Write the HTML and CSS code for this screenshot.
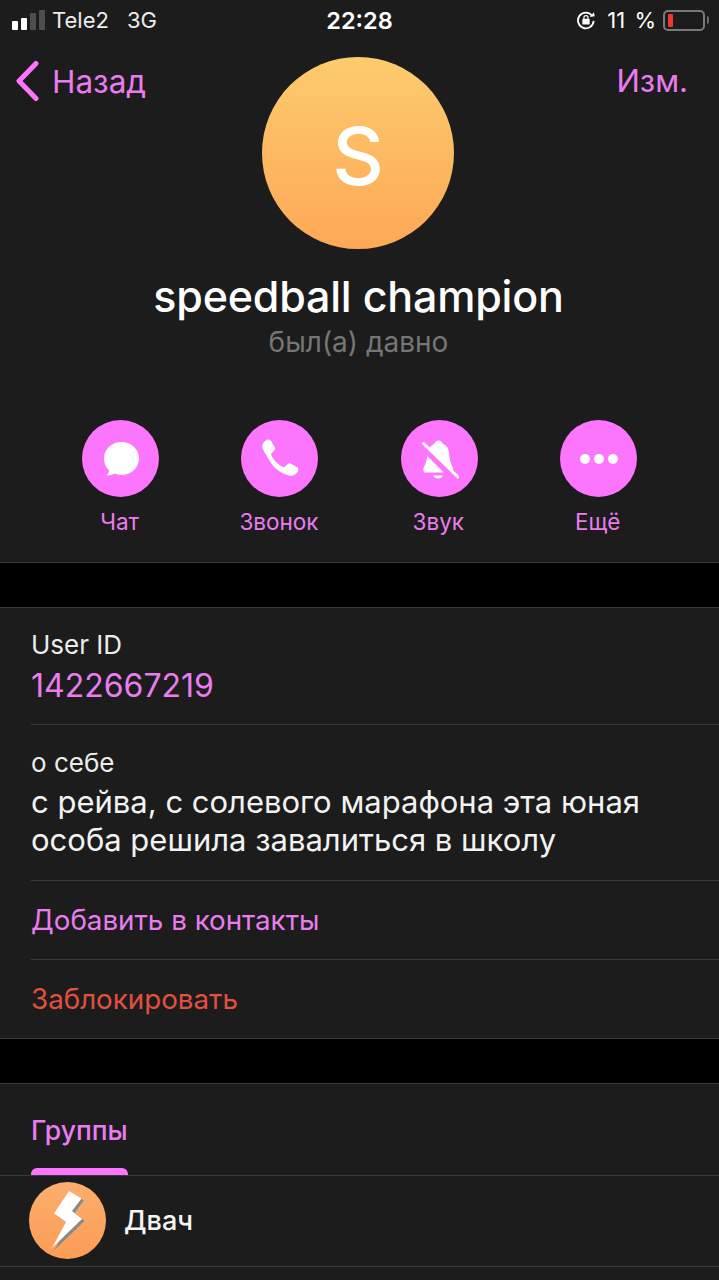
FILE: index.html
```html
<!DOCTYPE html>
<html lang="ru">

<head>
    <meta charset="UTF-8">
    <meta name="viewport" content="width=device-width, initial-scale=1.0">
    <title>speedball champion</title>
    <link rel="stylesheet" href="styles.css">
</head>

<body>
    <div class="statusbar">
        <div class="status-left">
            <span class="signal">
                <i class="on s1"></i><i class="on s2"></i><i class="s3"></i><i class="s4"></i>
            </span>
            <span class="carrier">Tele2</span>
            <span class="network">3G</span>
        </div>
        <div class="status-time">22:28</div>
        <div class="status-right">
            <svg class="lock" width="20" height="20" viewBox="0 0 22 22">
                <path d="M17.600 6.200A8.600 8.600 0 1 0 19.400 12" fill="none" stroke="#fff" stroke-width="2" />
                <path d="M15.200 7.600l5.400-.6-.9-4.600z" fill="#fff" />
                <rect x="7" y="9.600" width="8" height="6.400" rx="1" fill="#fff" />
                <path d="M8.700 9.800V8.400a2.300 2.300 0 0 1 4.600 0v1.400" fill="none" stroke="#fff" stroke-width="1.300" />
            </svg>
            <span class="percent">11 %</span>
            <span class="battery"><i class="battery-level"></i></span>
            <span class="battery-tip"></span>
        </div>
    </div>

    <header class="profile-head">
        <a class="back">
            <svg width="26" height="42" viewBox="0 0 26 42">
                <path d="M22 3.500L5 21l17 17.500" fill="none" stroke="#fb76fd" stroke-width="5" stroke-linecap="round" stroke-linejoin="round" />
            </svg>
            <span>Назад</span>
        </a>
        <div class="avatar">S</div>
        <a class="edit">Изм.</a>
    </header>

    <div class="name">speedball champion</div>
    <div class="last-seen">был(а) давно</div>

    <div class="actions">
        <div class="action">
            <span class="action-icon">
                <svg width="38" height="38" viewBox="0 0 38 38">
                    <path d="M19.500 2C29.300 2 37 9.300 37 18.500S29.300 35 19.500 35c-2.600 0-5-.5-7.200-1.400-1.700 1.300-4.300 2.100-7.800 2 1.500-1.500 2.400-3.200 2.700-5.200C3.700 27.300 2 23.100 2 18.500 2 9.300 9.700 2 19.500 2z" fill="#fff" />
                </svg>
            </span>
            <span class="action-label">Чат</span>
        </div>
        <div class="action">
            <span class="action-icon">
                <svg width="42" height="42" viewBox="0 0 42 42">
                    <path d="M4 5.500C5 3.500 7.500 1.500 9.500 1.500c1.300 0 2.200.8 2.900 2l3.200 5.600c.7 1.300.4 2.600-.6 3.600l-2.300 2.300c-.7.700-.7 1.400-.3 2.200 1.300 2.600 3 5 5 7 2 2 4.200 3.600 6.500 4.800.8.400 1.500.3 2.200-.4l2.300-2.300c1-1 2.300-1.300 3.600-.6l5.400 3.100c1.300.7 2.100 1.700 2 3-.1 1.900-2.300 4.300-4.300 5.200-1.500.7-3.300.9-5.100.5-6-1.300-11.500-5-15.700-9.200C9.500 20.600 5.500 15 3.700 10.500 3 8.700 3.200 7 4 5.500z" fill="#fff" />
                </svg>
            </span>
            <span class="action-label">Звонок</span>
        </div>
        <div class="action">
            <span class="action-icon">
                <svg width="40" height="44" viewBox="0 0 40 44">
                    <path d="M19.500 3.500c2.200 0 3.800 1.400 4 3.300 4.300 1.400 6.300 5.300 6.600 9.700.3 5 1.400 9.800 3.500 13.500 1 1.800.8 5.500-1 5.500H6.200c-1.800 0-2.300-3.500-1.300-5.300 2-3.700 3.300-8.600 3.800-13.700.5-4.400 3-8.300 6.800-9.700.2-1.900 1.800-3.300 4-3.300z" fill="#fff" />
                    <path d="M14 38.500h10c-.8 2-2.800 3-5 3s-4.200-1-5-3z" fill="#fff" />
                    <path d="M3 9.500l33 33" stroke="#fb76fd" stroke-width="6" />
                    <path d="M4.500 6.500L39 40" stroke="#fff" stroke-width="3" stroke-linecap="round" />
                </svg>
            </span>
            <span class="action-label">Звук</span>
        </div>
        <div class="action">
            <span class="action-icon">
                <svg width="38" height="12" viewBox="0 0 38 12">
                    <circle cx="5" cy="6" r="5" fill="#fff" />
                    <circle cx="19" cy="6" r="5" fill="#fff" />
                    <circle cx="33" cy="6" r="5" fill="#fff" />
                </svg>
            </span>
            <span class="action-label">Ещё</span>
        </div>
    </div>

    <div class="gap"></div>

    <section class="group">
        <div class="row info-row">
            <div class="row-label">User ID</div>
            <div class="row-value pink">1422667219</div>
        </div>
        <div class="row about-row">
            <div class="row-label">о себе</div>
            <div class="about-text">с рейва, с солевого марафона эта юная<br>особа решила завалиться в школу</div>
        </div>
        <div class="row link-row pink">Добавить в контакты</div>
        <div class="row link-row red">Заблокировать</div>
    </section>

    <div class="gap"></div>

    <section class="group groups-tab">
        <div class="tab">
            <span class="tab-title">Группы</span>
            <span class="tab-marker"></span>
        </div>
    </section>

    <div class="chat-row">
        <div class="chat-avatar">
            <svg width="40" height="60" viewBox="0 0 40 60">
                <path d="M21 0l12.500 7.500L24 20l10 8L4 57l14-26-12-8.500z" fill="#8a8a8a" transform="translate(2.500 2)" />
                <path d="M21 0l12.500 7.500L24 20l10 8L4 57l14-26-12-8.500z" fill="#fff" />
            </svg>
        </div>
        <div class="chat-name">Двач</div>
    </div>
</body>

</html>
```

FILE: styles.css
```css
* {
    box-sizing: border-box;
}

body {
    margin: 0;
    background-color: #1c1c1c;
    color: #fff;
    font-family: Inter, "Noto Sans", sans-serif;
    overflow: hidden;
}

.pink {
    color: #ea7cf0;
}

.red {
    color: #e0513f;
}

/* status bar */
.statusbar {
    height: 40px;
    padding: 0 16px 0 12px;
    display: grid;
    grid-template-columns: 1fr auto 1fr;
    align-items: center;
    font-size: 22px;
}

.status-left {
    display: flex;
    align-items: center;
    color: #ececec;
}

.signal {
    display: flex;
    align-items: flex-end;
    gap: 3px;
    height: 20px;
    margin-right: 7px;
}

.signal i {
    width: 6px;
    border-radius: 1px;
    background-color: #4d4d4d;
}

.signal .on {
    background-color: #fff;
}

.s1 {
    height: 9px;
}

.s2 {
    height: 12px;
}

.s3 {
    height: 17px;
}

.s4 {
    height: 20px;
}

.network {
    margin-left: 18px;
}

.status-time {
    margin-left: 4px;
    font-weight: 600;
    font-size: 23.500px;
}

.status-right {
    display: flex;
    align-items: center;
    justify-content: flex-end;
}

.percent {
    margin: 0 7px 0 11px;
    font-size: 22px;
    word-spacing: 3px;
    white-space: nowrap;
}

.battery {
    width: 42px;
    height: 21px;
    padding: 2px 3px;
    border: 2px solid #7a7a7a;
    border-radius: 5px;
    display: flex;
}

.battery-level {
    width: 5px;
    border-radius: 1px;
    background-color: #f0392e;
}

.battery-tip {
    width: 2px;
    height: 8px;
    margin-left: 2px;
    margin-right: -6px;
    background-color: #6a6a6a;
    border-radius: 0 2px 2px 0;
}

/* header with avatar */
.profile-head {
    display: grid;
    grid-template-columns: 1fr auto 1fr;
    align-items: start;
    padding: 17px 17px 0 14px;
}

.back {
    display: flex;
    align-items: center;
    gap: 12px;
    padding-top: 3px;
    font-size: 31.500px;
    color: #ea7cf0;
}

.edit {
    justify-self: end;
    padding-top: 5px;
    margin-right: 14px;
    font-size: 31px;
    color: #ea7cf0;
}

.avatar {
    width: 192px;
    height: 192px;
    padding-top: 4px;
    border-radius: 50%;
    background: linear-gradient(#fdcb6e, #fda856);
    display: flex;
    align-items: center;
    justify-content: center;
    font-size: 80px;
    font-weight: 500;
    color: #fff;
}

.name {
    margin-top: 21px;
    padding-right: 2px;
    text-align: center;
    font-size: 43px;
    font-weight: 500;
    line-height: 52px;
    letter-spacing: -0.2px;
}

.last-seen {
    margin-top: 4px;
    padding-right: 2px;
    text-align: center;
    font-size: 28px;
    line-height: 32px;
    color: #767676;
}

/* action buttons */
.actions {
    margin-top: 62px;
    padding-left: 41px;
    display: grid;
    grid-template-columns: repeat(4, 159.330px);
    height: 143px;
    border-bottom: 1px solid #3a3a3a;
}

.action {
    display: flex;
    flex-direction: column;
    align-items: center;
}

.action-icon {
    width: 77px;
    height: 77px;
    border-radius: 50%;
    background-color: #fb76fd;
    display: flex;
    align-items: center;
    justify-content: center;
}

.action-label {
    margin-top: 12px;
    padding-right: 2px;
    font-size: 22.500px;
    line-height: 26px;
    color: #ea7cf0;
}

.gap {
    height: 44px;
    background-color: #000;
}

.group {
    border-top: 1px solid #3a3a3a;
    border-bottom: 1px solid #3a3a3a;
}

.row {
    margin-left: 31px;
    border-bottom: 1px solid #3a3a3a;
}

.row:last-child {
    height: 78px;
    border-bottom: none;
}

.info-row {
    height: 117px;
    padding-top: 22px;
}

.about-row {
    height: 156px;
    padding-top: 23px;
}

.row-label {
    font-size: 26px;
    line-height: 30px;
    color: #ececec;
}

.row-value {
    margin-top: 7px;
    font-size: 32px;
    line-height: 38px;
}

.about-text {
    margin-top: 5px;
    font-size: 31px;
    line-height: 38px;
    color: #f2f2f2;
}

.link-row {
    height: 79px;
    display: flex;
    align-items: center;
    font-size: 27.750px;
}

/* tab strip */
.groups-tab {
    height: 93px;
    padding-left: 31px;
}

.tab {
    width: 97px;
    height: 91px;
    display: flex;
    flex-direction: column;
    justify-content: space-between;
    padding-top: 30px;
}

.tab-title {
    font-size: 26.500px;
    font-weight: 500;
    line-height: 32px;
    color: #ea7cf0;
}

.tab-marker {
    height: 7px;
    background-color: #fb76fd;
    border-radius: 6px 6px 0 0;
}

.chat-row {
    height: 92px;
    margin-top: -1px;
    border-bottom: 1px solid #3a3a3a;
    padding: 0 0 0 29px;
    display: flex;
    align-items: center;
    gap: 18px;
}

.chat-avatar {
    width: 77px;
    height: 77px;
    border-radius: 50%;
    background: linear-gradient(#fcae6e, #fb9d55);
    display: flex;
    align-items: center;
    justify-content: center;
}

.chat-name {
    font-size: 27px;
    font-weight: 500;
    color: #f5f5f5;
}
```
